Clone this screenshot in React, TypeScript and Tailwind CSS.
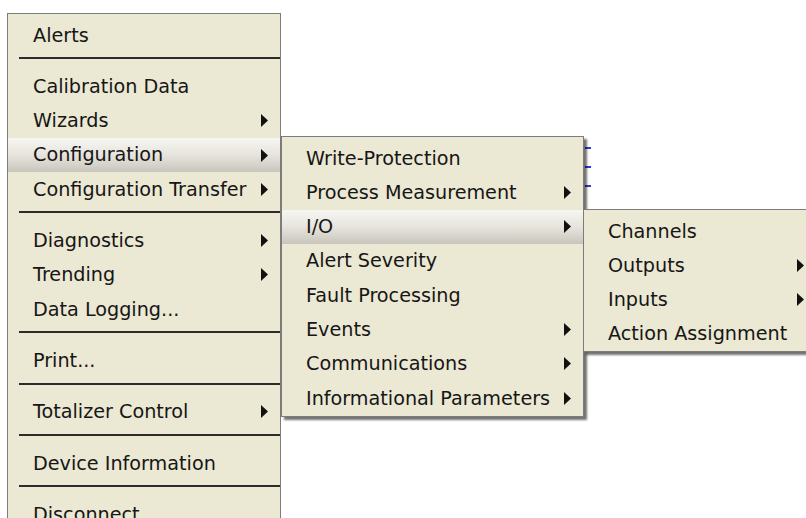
import React from "react";

type Entry = { label: string; sub?: boolean; active?: boolean } | "sep";

const mainItems: Entry[] = [
  { label: "Alerts" },
  "sep",
  { label: "Calibration Data" },
  { label: "Wizards", sub: true },
  { label: "Configuration", sub: true, active: true },
  { label: "Configuration Transfer", sub: true },
  "sep",
  { label: "Diagnostics", sub: true },
  { label: "Trending", sub: true },
  { label: "Data Logging..." },
  "sep",
  { label: "Print..." },
  "sep",
  { label: "Totalizer Control", sub: true },
  "sep",
  { label: "Device Information" },
  "sep",
  { label: "Disconnect" },
];

const configItems: Entry[] = [
  { label: "Write-Protection" },
  { label: "Process Measurement", sub: true },
  { label: "I/O", sub: true, active: true },
  { label: "Alert Severity" },
  { label: "Fault Processing" },
  { label: "Events", sub: true },
  { label: "Communications", sub: true },
  { label: "Informational Parameters", sub: true },
];

const ioItems: Entry[] = [
  { label: "Channels" },
  { label: "Outputs", sub: true },
  { label: "Inputs", sub: true },
  { label: "Action Assignment" },
];

function Arrow() {
  return (
    <svg width="7" height="13" viewBox="0 0 7 13" className="shrink-0">
      <path d="M0 0 L7 6.5 L0 13 Z" fill="#111" />
    </svg>
  );
}

function Rows({ items, pad }: { items: Entry[]; pad: string }) {
  return (
    <>
      {items.map((it, i) =>
        it === "sep" ? (
          <div key={i} className="h-[17px] pt-[5px]">
            <div className="ml-[11px] h-[2px] bg-[#2b2b2b]" />
          </div>
        ) : (
          <div
            key={i}
            className={
              "flex h-[34.3px] items-center justify-between gap-[2px] pr-[12px] whitespace-nowrap " +
              pad +
              (it.active ? " bg-linear-to-b from-[#f7f6f2] via-[#e6e4dc] to-[#c8c6bc]" : "")
            }
          >
            <span>{it.label}</span>
            {it.sub ? <Arrow /> : null}
          </div>
        )
      )}
    </>
  );
}

export default function App() {
  return (
    <div className="relative h-[518px] w-[806px] overflow-hidden bg-white font-['DejaVu_Sans',sans-serif] text-[19.2px] leading-none text-[#161616]">
      {/* background app content peeking through */}
      <div className="absolute left-[585px] top-[147px] flex flex-col gap-[17px]">
        <div className="h-[2px] w-[6px] bg-[#2b3bd8]" />
        <div className="h-[2px] w-[6px] bg-[#2b3bd8]" />
        <div className="h-[2px] w-[6px] bg-[#2b3bd8]" />
      </div>

      {/* main menu */}
      <div className="absolute left-[7px] top-[13px] h-[540px] w-[274px] border border-[#7c7c7c] bg-[#ebe8d3] pt-[4px]">
        <Rows items={mainItems} pad="pl-[25px]" />
      </div>

      {/* Configuration submenu */}
      <div className="absolute left-[281px] top-[136px] w-[303px] border border-[#7c7c7c] bg-[#ebe8d3] pt-[4px] pb-[1px] shadow-[3px_3px_2px_rgba(0,0,0,0.55)]">
        <Rows items={configItems} pad="pl-[24px]" />
      </div>

      {/* I/O submenu */}
      <div className="absolute left-[583px] top-[209px] w-[234px] border border-[#7c7c7c] bg-[#ebe8d3] pt-[4px] shadow-[3px_3px_2px_rgba(0,0,0,0.55)]">
        <Rows items={ioItems} pad="pl-[24px]" />
      </div>
    </div>
  );
}
